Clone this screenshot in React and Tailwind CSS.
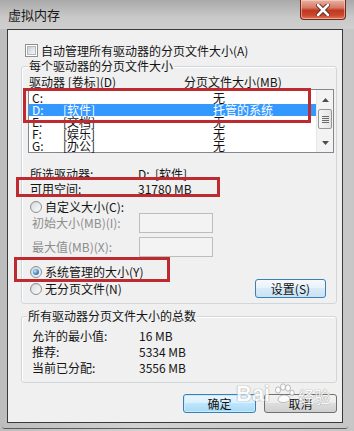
import React from "react";

const drives = [
  { drive: "C:", label: "", size: "无" },
  { drive: "D:", label: "[软件]", size: "托管的系统", selected: true },
  { drive: "E:", label: "[文档]", size: "无" },
  { drive: "F:", label: "[娱乐]", size: "无" },
  { drive: "G:", label: "[办公]", size: "无" },
];

const totals = [
  { label: "允许的最小值:", value: "16 MB" },
  { label: "推荐:", value: "5334 MB" },
  { label: "当前已分配:", value: "3556 MB" },
];

const Radio = ({ checked }) => (
  <span className="flex h-[12px] w-[12px] shrink-0 items-center justify-center rounded-full border border-[#8f8f8f] bg-[linear-gradient(135deg,#cfd2d6,#fbfbfb)]">
    {checked ? (
      <span className="h-[6px] w-[6px] rounded-full bg-[radial-gradient(circle_at_35%_35%,#c4e8fc,#3b8ccb_55%,#1b4f86)]" />
    ) : (
      <span className="h-[8px] w-[8px] rounded-full bg-[linear-gradient(135deg,#dcdfe3,#f8f8f8)]" />
    )}
  </span>
);

const WinButton = ({ title, isDefault, blue }) => {
  let skin =
    "border-[#707070] bg-[linear-gradient(#f2f2f2_0%,#ebebeb_49%,#dddddd_50%,#cfcfcf_100%)]";
  if (isDefault) {
    skin =
      "border-[#3c7fb1] bg-[linear-gradient(#eaf6fd_0%,#d9f0fc_49%,#bee6fd_50%,#a7d9f5_100%)] shadow-[inset_0_0_0_1px_#c8eafc]";
  }
  if (blue) {
    skin =
      "border-[#3c7fb1] bg-[linear-gradient(#f4f9fd_0%,#e6f2fb_49%,#d7eaf8_50%,#c9e2f5_100%)]";
  }
  return (
    <button
      type="button"
      className={`flex h-full w-full items-center justify-center rounded-[3px] border text-[12px] leading-[14px] text-[#111] ${skin}`}
    >
      {title}
    </button>
  );
};

const Arrow = ({ up }) => (
  <svg width="7" height="4" viewBox="0 0 7 4">
    <path d={up ? "M0 4 L3.5 0 L7 4 Z" : "M0 0 L3.5 4 L7 0 Z"} fill="#4d4d4d" />
  </svg>
);

const App = () => {
  return (
    <div className="relative h-[431px] w-[354px] overflow-hidden bg-[linear-gradient(90deg,#bdbdbd,#d2d2d2_40%,#c6c6c6)] font-['Noto_Sans_CJK_SC',sans-serif] text-[12px] leading-[14px] text-[#141414]">
      {/* title bar */}
      <div className="flex h-[29px] items-start bg-[linear-gradient(180deg,#a9a9a9,#c9c9c9_60%,#cfcfcf)]">
        <span className="ml-[8px] mt-[8px] text-[13px] leading-[14px] text-[#1a1a1a]">
          虚拟内存
        </span>
        <div className="ml-auto mr-[8px] flex h-[20px] w-[46px] items-center justify-center rounded-b-[4px] border border-t-0 border-[#6e2a20] bg-[linear-gradient(180deg,#e9b2a5_0%,#d67a64_40%,#c0381f_55%,#c9482c_80%,#dd7a5c_100%)] shadow-[inset_0_0_0_1px_rgba(255,220,210,0.5)]">
          <svg width="14" height="12" viewBox="0 0 14 12">
            <path
              d="M2 1 L12 11 M12 1 L2 11"
              stroke="#5a1f16"
              strokeWidth="4.4"
              strokeLinecap="round"
            />
            <path
              d="M2 1 L12 11 M12 1 L2 11"
              stroke="#ffffff"
              strokeWidth="2.6"
              strokeLinecap="round"
            />
          </svg>
        </div>
      </div>

      {/* client area */}
      <div className="ml-[7px] flex h-[394px] w-[336px] flex-col border border-[#3a3a3a] bg-[#f0f0f0]">
        <div className="ml-[17px] mt-[14px] flex h-[13px] items-center">
          <span className="flex h-[13px] w-[13px] items-center justify-center border border-[#8e8f8f] bg-white">
            <span className="h-[9px] w-[9px] border border-[#b4b8be] bg-[linear-gradient(135deg,#c9cdd3,#f7f7f7)]" />
          </span>
          <span className="ml-[3px]">自动管理所有驱动器的分页文件大小(A)</span>
        </div>

        {/* per drive group */}
        <div className="relative ml-[13px] mt-[9px] w-[316px] rounded-[3px] border border-[#d0d7dc] pb-[5px] shadow-[inset_1px_1px_0_#ffffff]">
          <span className="absolute left-[6px] top-[-8px] bg-[#f0f0f0] px-[1px]">
            每个驱动器的分页文件大小
          </span>

          <div className="mt-[8px] flex h-[14px] pl-[7px]">
            <span className="w-[155px]">驱动器 [卷标](D)</span>
            <span>分页文件大小(MB)</span>
          </div>

          <div className="ml-[6px] flex h-[64px] w-[306px] border border-[#828790] bg-white">
            <div className="flex-1 pt-[2px]">
              {drives.map((d) => (
                <div
                  key={d.drive}
                  className={`flex h-[12px] items-center pl-[3px] leading-[12px] ${
                    d.selected ? "bg-[#3399ff] text-white" : ""
                  }`}
                >
                  <span className="w-[31px] shrink-0">{d.drive}</span>
                  <span className="w-[150px] shrink-0">{d.label}</span>
                  <span>{d.size}</span>
                </div>
              ))}
            </div>
            <div className="flex w-[17px] flex-col border-l border-[#e6e6e6] bg-[#f3f3f3]">
              <div className="flex h-[18px] items-center justify-center pt-[2px]">
                <Arrow up />
              </div>
              <div className="mx-[1px] mt-[1px] flex h-[20px] flex-col items-center justify-center gap-[1px] rounded-[2px] border border-[#979797] bg-[linear-gradient(90deg,#f5f5f5,#e4e4e4)]">
                <span className="h-px w-[7px] bg-[#6b6b6b]" />
                <span className="h-px w-[7px] bg-[#6b6b6b]" />
                <span className="h-px w-[7px] bg-[#6b6b6b]" />
                <span className="h-px w-[7px] bg-[#6b6b6b]" />
              </div>
              <div className="flex-1" />
              <div className="flex h-[18px] items-center justify-center">
                <Arrow />
              </div>
            </div>
          </div>

          <div className="mt-[13px] pl-[8px]">
            <div className="flex h-[15px] items-center">
              <span className="w-[108px]">所选驱动器:</span>
              <span>D:&nbsp;&nbsp;[软件]</span>
            </div>
            <div className="flex h-[15px] items-center">
              <span className="w-[108px]">可用空间:</span>
              <span>31780 MB</span>
            </div>
          </div>

          <div className="mt-[5px] flex h-[12px] items-center gap-[3px] pl-[8px]">
            <Radio />
            <span>自定义大小(C):</span>
          </div>
          <div className="flex h-[20px] items-center pl-[10px] text-[#8d8d8d]">
            <span className="w-[107px]">初始大小(MB)(I):</span>
            <span className="h-[20px] w-[74px] border border-[#bdbdbd] bg-[#f3f3f3]" />
          </div>
          <div className="mt-[4px] flex h-[20px] items-center pl-[10px] text-[#8d8d8d]">
            <span className="w-[107px]">最大值(MB)(X):</span>
            <span className="h-[20px] w-[74px] border border-[#bdbdbd] bg-[#f3f3f3]" />
          </div>

          <div className="mt-[9px] flex h-[12px] items-center gap-[3px] pl-[8px]">
            <Radio checked />
            <span>系统管理的大小(Y)</span>
          </div>
          <div className="mt-[1px] flex h-[19px] items-center pl-[8px] pr-[10px]">
            <Radio />
            <span className="ml-[3px]">无分页文件(N)</span>
            <div className="ml-auto flex h-[19px] w-[71px]">
              <WinButton title="设置(S)" blue />
            </div>
          </div>
        </div>

        {/* totals group */}
        <div className="relative ml-[13px] mt-[12px] w-[316px] rounded-[3px] border border-[#d0d7dc] pb-[6px] shadow-[inset_1px_1px_0_#ffffff]">
          <span className="absolute left-[5px] top-[-8px] bg-[#f0f0f0] px-[1px]">
            所有驱动器分页文件大小的总数
          </span>
          <div className="mt-[11px] pl-[10px]">
            {totals.map((t) => (
              <div key={t.label} className="flex h-[16px] items-center">
                <span className="w-[107px]">{t.label}</span>
                <span>{t.value}</span>
              </div>
            ))}
          </div>
        </div>

        <div className="mt-[11px] flex justify-end gap-[8px] pr-[5px]">
          <div className="flex h-[19px] w-[73px]">
            <WinButton title="确定" isDefault />
          </div>
          <div className="flex h-[19px] w-[73px]">
            <WinButton title="取消" />
          </div>
        </div>
      </div>

      {/* bottom edge of the frame */}
      <div className="ml-[2px] mr-[6px] mt-[2px] h-[4px] rounded-b-[3px] border-b border-[#5a5a5a]" />

      {/* red annotation boxes */}
      <div className="pointer-events-none absolute left-[23px] top-[88px] h-[35px] w-[288px] border-[3px] border-[#bd2a30]" />
      <div className="pointer-events-none absolute left-[16px] top-[177px] h-[20px] w-[204px] border-[3px] border-[#bd2a30]" />
      <div className="pointer-events-none absolute left-[14px] top-[257px] h-[25px] w-[156px] border-[3px] border-[#bd2a30]" />

      {/* watermark */}
      <div className="pointer-events-none absolute left-[236px] top-[382px] flex items-end gap-[2px] opacity-80">
        <span className="font-['Liberation_Sans',sans-serif] text-[22px] font-bold leading-[24px] text-white [text-shadow:0_0_1px_#8a8a8a,0_0_1px_#8a8a8a]">
          Bai
        </span>
        <svg width="24" height="24" viewBox="0 0 24 24">
          <g fill="#ffffff" stroke="#9a9a9a" strokeWidth="0.8">
            <ellipse cx="6" cy="8" rx="2.5" ry="3.2" />
            <ellipse cx="11" cy="5" rx="2.5" ry="3.2" />
            <ellipse cx="16" cy="6" rx="2.5" ry="3.2" />
            <ellipse cx="20" cy="11" rx="2.2" ry="2.8" />
            <path d="M6 18 C6 12 17 11 18 17 C18 21 7 22 6 18 Z" />
          </g>
        </svg>
        <span className="text-[16px] leading-[20px] text-white [text-shadow:0_0_1px_#8a8a8a,0_0_1px_#8a8a8a]">
          经验
        </span>
      </div>
    </div>
  );
};

export default App;
